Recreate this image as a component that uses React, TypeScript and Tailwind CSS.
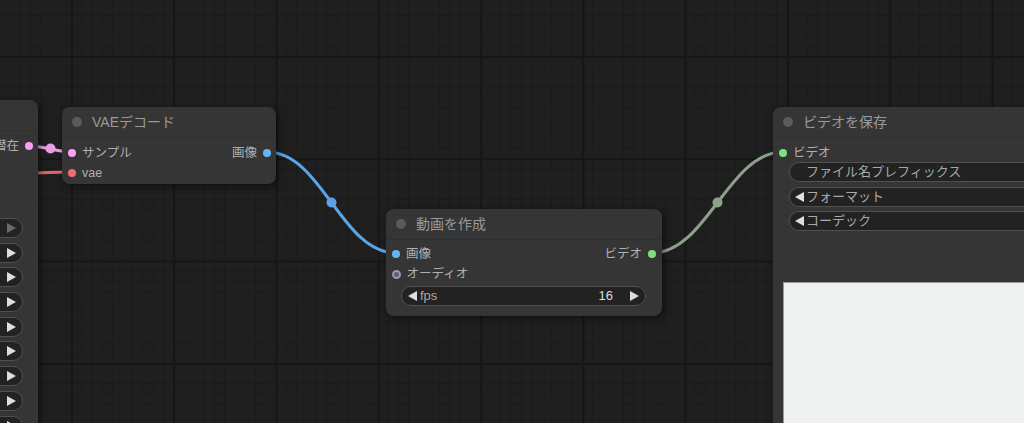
import React from "react";

const FONT = "font-['Liberation_Sans','Noto_Sans_CJK_JP',sans-serif]";

// slot dot colours by type
const SLOT: Record<string, string> = {
  latent: "bg-[#f4a2f0]",
  vae: "bg-[#f26d6d]",
  image: "bg-[#64b5f6]",
  video: "bg-[#7ee27a]",
};

function Dot({ type }: { type: string }) {
  if (type === "audio")
    return <span className="w-[9px] h-[9px] rounded-full border-2 border-[#9a9ab4] bg-[#5e5e70] shrink-0" />;
  return <span className={`w-[8px] h-[8px] rounded-full shrink-0 ${SLOT[type]}`} />;
}

function Title({ text }: { text: string }) {
  return (
    <div className="h-[31px] flex items-center pl-[10px] gap-[10px] border-b border-[#2f2f2f]">
      <span className="w-[10px] h-[10px] rounded-full bg-[#5b5b5b]" />
      <span className="text-[14px] text-[#9a9a9a]">{text}</span>
    </div>
  );
}

function Arrow({ dir, dim }: { dir: "l" | "r"; dim?: boolean }) {
  return (
    <svg width="9" height="10" viewBox="0 0 9 10" className="shrink-0">
      <polygon points={dir === "l" ? "9,0 9,10 0,5" : "0,0 0,10 9,5"} fill={dim ? "#6a6a6a" : "#dedede"} />
    </svg>
  );
}

const pill = "h-[20px] rounded-full bg-[#222222] border border-[#505050] flex items-center text-[12.5px]";

export default function App() {
  return (
    <div
      className={`relative w-[1024px] h-[423px] overflow-hidden bg-[#1f1f1f] ${FONT} [background-image:linear-gradient(to_right,#161616_1.5px,transparent_1.5px),linear-gradient(to_bottom,#161616_1.5px,transparent_1.5px),linear-gradient(to_right,#1a1a1a_1px,transparent_1px),linear-gradient(to_bottom,#1a1a1a_1px,transparent_1px)] [background-size:102.3px_102.3px,102.3px_102.3px,10.23px_10.23px,10.23px_10.23px] [background-position:71px_56px,71px_56px,71px_56px,71px_56px]`}
    >
      {/* links, drawn under the nodes */}
      <svg className="absolute inset-0" width="1024" height="423">
        <path d="M-80,178 C0,178 10,172 72,172" stroke="#e06767" strokeWidth="3" fill="none" />
        <path d="M29,146 C45,146 56,152 72,152" stroke="#e79ee3" strokeWidth="3" fill="none" />
        <circle cx="50.5" cy="148.5" r="5" fill="#e79ee3" />
        <path d="M267,152 C322,152 341,253 396,253" stroke="#5aa4e6" strokeWidth="3" fill="none" />
        <circle cx="331.5" cy="202.5" r="5" fill="#5aa4e6" />
        <path d="M652,253 C707,253 728,152 783,152" stroke="#8ca08a" strokeWidth="3" fill="none" />
        <circle cx="717.5" cy="202.5" r="5" fill="#8ca08a" />
      </svg>

      {/* node cut off on the left */}
      <div className="absolute left-[-200px] top-[100px] w-[238px] h-[400px] rounded-[8px] bg-[#353535] shadow-[2px_2px_6px_rgba(0,0,0,0.5)]">
        <div className="h-[31px] border-b border-[#2f2f2f]" />
        <div className="pt-[5px] flex flex-col">
          <div className="h-[20px] flex items-center justify-end gap-[6px] pr-[5px] text-[12.5px] text-[#b0b0b0]">
            <span>潜在</span>
            <Dot type="latent" />
          </div>
        </div>
        <div className="mt-[62px] flex flex-col gap-[4.7px] pl-[10px] pr-[15px]">
          {Array.from({ length: 9 }).map((_, i) => (
            <div key={i} className={`${pill} justify-end pr-[6px]`}>
              <Arrow dir="r" dim={i === 0} />
            </div>
          ))}
        </div>
      </div>

      {/* VAE decode */}
      <div className="absolute left-[62px] top-[107px] w-[214px] rounded-[8px] bg-[#353535] shadow-[2px_2px_6px_rgba(0,0,0,0.5)]">
        <Title text="VAEデコード" />
        <div className="pt-[5px] pb-[1px] flex flex-col text-[12.5px] text-[#b0b0b0]">
          <div className="h-[20px] flex items-center justify-between pl-[6px] pr-[5px]">
            <div className="flex items-center gap-[6px]">
              <Dot type="latent" />
              <span>サンプル</span>
            </div>
            <div className="flex items-center gap-[6px]">
              <span>画像</span>
              <Dot type="image" />
            </div>
          </div>
          <div className="h-[20px] flex items-center gap-[6px] pl-[6px]">
            <Dot type="vae" />
            <span>vae</span>
          </div>
        </div>
      </div>

      {/* create video */}
      <div className="absolute left-[386px] top-[209px] w-[276px] rounded-[8px] bg-[#353535] shadow-[2px_2px_6px_rgba(0,0,0,0.5)]">
        <Title text="動画を作成" />
        <div className="pt-[4px] pb-[10px] flex flex-col text-[12.5px] text-[#b0b0b0]">
          <div className="h-[20px] flex items-center justify-between pl-[6px] pr-[6px]">
            <div className="flex items-center gap-[6px]">
              <Dot type="image" />
              <span>画像</span>
            </div>
            <div className="flex items-center gap-[6px]">
              <span>ビデオ</span>
              <Dot type="video" />
            </div>
          </div>
          <div className="h-[20px] flex items-center gap-[6px] pl-[5.5px]">
            <Dot type="audio" />
            <span>オーディオ</span>
          </div>
          <div className={`${pill} mt-[2px] ml-[15px] mr-[16px] px-[6px] justify-between text-[13px]`}>
            <div className="flex items-center gap-[3px]">
              <Arrow dir="l" />
              <span className="text-[#a8a8a8]">fps</span>
            </div>
            <div className="flex items-center gap-[17px]">
              <span className="text-[#dcdcdc]">16</span>
              <Arrow dir="r" />
            </div>
          </div>
        </div>
      </div>

      {/* save video */}
      <div className="absolute left-[773px] top-[107px] w-[300px] h-[360px] rounded-[8px] bg-[#353535] shadow-[2px_2px_6px_rgba(0,0,0,0.5)]">
        <Title text="ビデオを保存" />
        <div className="pt-[5px] flex flex-col text-[12.5px] text-[#b0b0b0]">
          <div className="h-[20px] flex items-center gap-[6px] pl-[6px]">
            <Dot type="video" />
            <span>ビデオ</span>
          </div>
          <div className="-mt-[1px] ml-[16px] flex flex-col gap-[4.5px]">
            <div className={`${pill} pl-[16px] text-[#a8a8a8] text-[13px]`}>ファイル名プレフィックス</div>
            <div className={`${pill} pl-[5px] gap-[2px] text-[#a8a8a8] text-[13px]`}>
              <Arrow dir="l" />
              <span>フォーマット</span>
            </div>
            <div className={`${pill} pl-[5px] gap-[2px] text-[#a8a8a8] text-[13px]`}>
              <Arrow dir="l" />
              <span>コーデック</span>
            </div>
          </div>
          <div className="mt-[51px] ml-[10px] h-[160px] bg-[#eff1f0] border-t border-l border-[#9a9a9a]" />
        </div>
      </div>
    </div>
  );
}
